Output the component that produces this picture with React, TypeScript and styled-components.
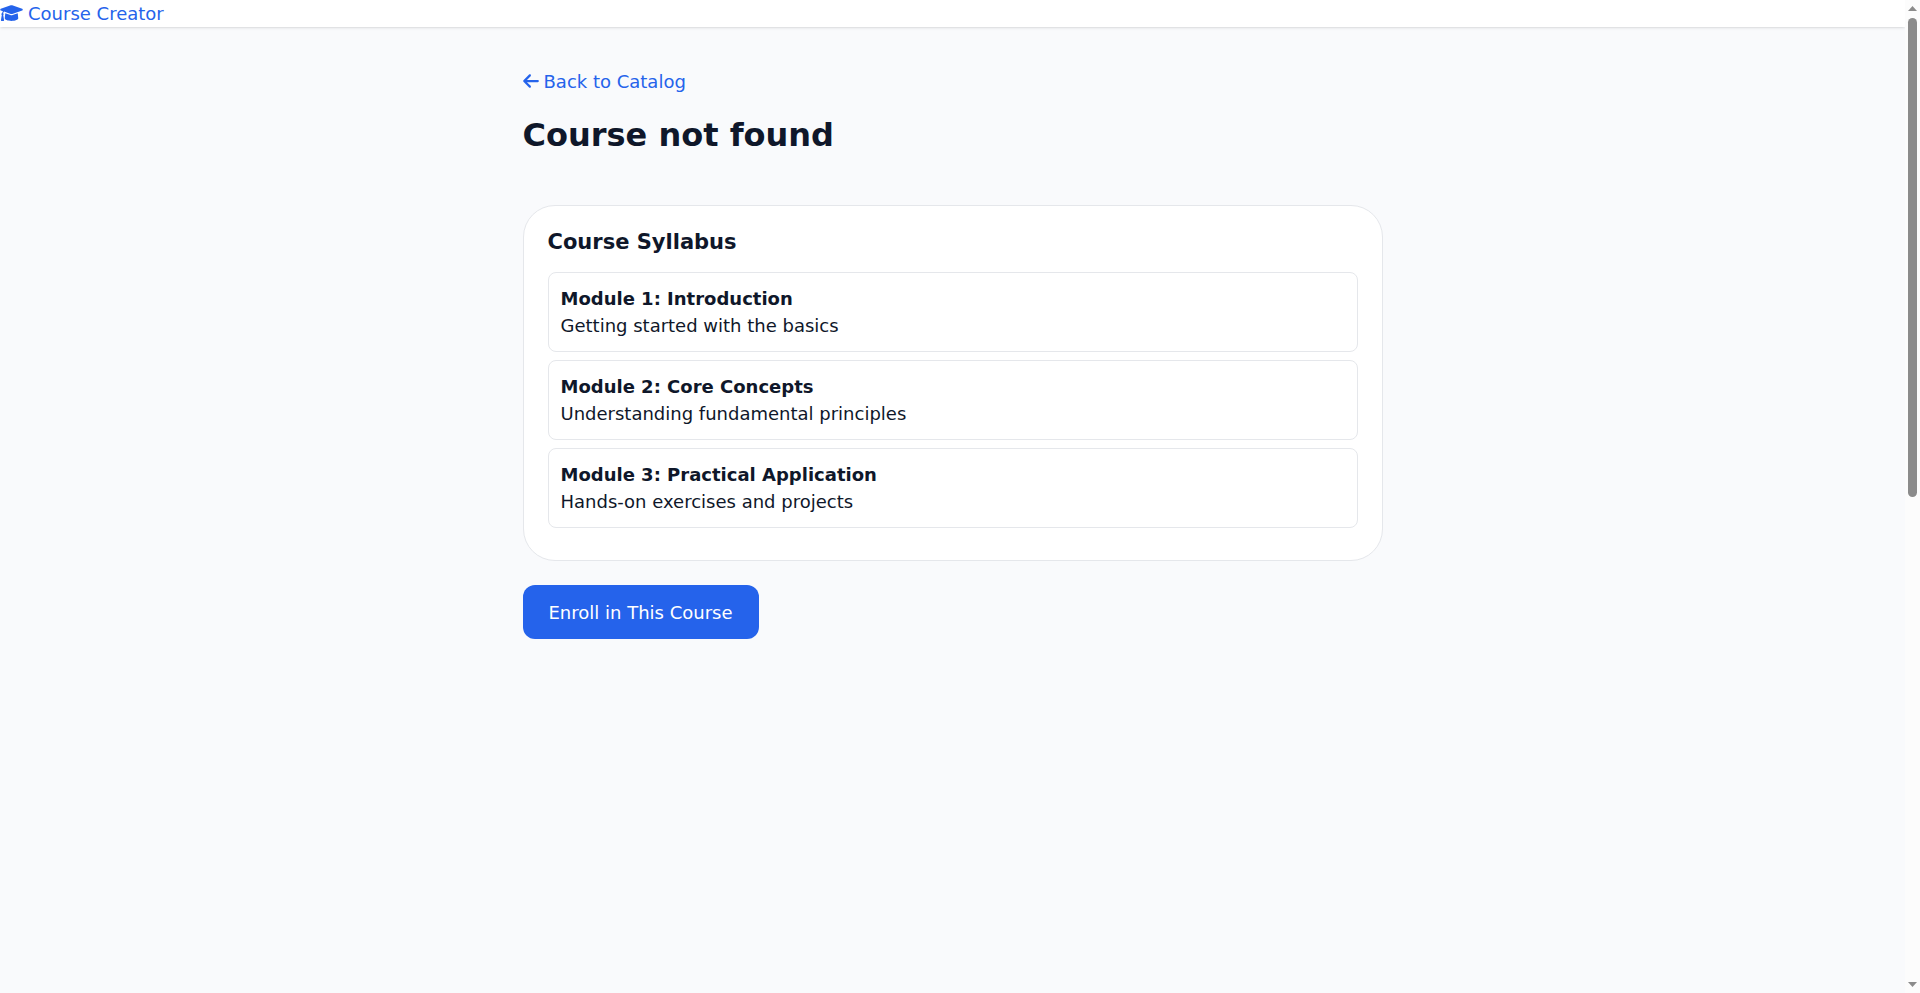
import React from "react";
import styled, { createGlobalStyle } from "styled-components";
import { FaArrowLeft } from "react-icons/fa6";

const GlobalStyle = createGlobalStyle`
  * {
    box-sizing: border-box;
  }
  body {
    margin: 0;
    background: #f9fafc;
    color: #0f172a;
    font-family: "DejaVu Sans", sans-serif;
    font-size: 18px;
    line-height: 27px;
  }
`;

const Shell = styled.div`
  display: grid;
  grid-template-columns: minmax(0, 1fr) 15px;
  height: 100vh;
`;

const Page = styled.div`
  overflow: hidden;
`;

const ScrollTrack = styled.div`
  display: flex;
  flex-direction: column;
  align-items: center;
  padding: 6px 0;
  background: #fcfcfc;
`;

const ScrollArrow = styled.svg`
  display: block;
  width: 9px;
  height: 5px;
  fill: #8b8b8b;
`;

const ScrollLane = styled.div`
  flex: 1;
  width: 9px;
  padding: 7px 0;
`;

const ScrollThumb = styled.div`
  height: 50%;
  border-radius: 5px;
  background: #8b8b8b;
`;

const Header = styled.header`
  display: flex;
  background: #ffffff;
  box-shadow: 0 1px 3px rgba(0, 0, 0, 0.1), 0 1px 2px -1px rgba(0, 0, 0, 0.1);
`;

const IconLink = styled.a<{ $iconWidth: number }>`
  display: inline-flex;
  align-items: center;
  gap: 5px;
  color: #2563eb;
  text-decoration: none;

  svg {
    flex: none;
    height: 18px;
    width: ${(p) => p.$iconWidth}px;
    margin-bottom: 1px;
  }
`;

const Main = styled.main`
  max-width: 900px;
  margin: 0 auto;
  padding: 41px 20px;
`;

const Title = styled.h1`
  margin: 16px 0 48px;
  font-size: 32px;
  line-height: 44px;
  font-weight: 700;
`;

const Card = styled.section`
  margin-bottom: 24px;
  padding: 24px 24px 32px;
  background: #ffffff;
  border: 1px solid #e5e7eb;
  border-radius: 32px;
`;

const CardTitle = styled.h2`
  margin: 0 0 17px;
  font-size: 21px;
  line-height: 25px;
  font-weight: 700;
`;

const ModuleList = styled.ul`
  display: grid;
  gap: 8px;
  margin: 0;
  padding: 0;
  list-style: none;
`;

const Module = styled.li`
  padding: 12px;
  border: 1px solid #e5e7eb;
  border-radius: 8px;
`;

const ModuleName = styled.strong`
  display: block;
  font-weight: 700;
`;

const EnrollButton = styled.button`
  min-height: 54px;
  padding: 0 26px;
  border: 0;
  border-radius: 12px;
  background: #2563eb;
  color: #ffffff;
  font: inherit;
  cursor: pointer;
`;

const modules = [
  { name: "Module 1: Introduction", summary: "Getting started with the basics" },
  { name: "Module 2: Core Concepts", summary: "Understanding fundamental principles" },
  { name: "Module 3: Practical Application", summary: "Hands-on exercises and projects" },
];

function GraduationCap() {
  return (
    <svg viewBox="0 0 640 512" fill="currentColor" aria-hidden>
      <path d="M623.1 136.9l-282.7-101.2c-13.73-4.91-28.7-4.91-42.43 0L16.05 136.9C6.438 140.4 0 149.6 0 160s6.438 19.65 16.05 23.09L76.07 204.6c-11.89 15.8-20.26 34.16-24.55 53.95C40.05 263.4 32 274.8 32 288c0 9.953 4.814 18.49 11.94 24.36l-24.83 149C17.48 471.1 25 480 34.89 480H93.11c9.887 0 17.41-8.879 15.78-18.63l-24.83-149C91.19 306.5 96 297.1 96 288c0-10.29-5.174-19.03-12.72-24.89c4.252-17.76 12.88-33.82 24.94-47.03l190.6 68.23c13.73 4.91 28.7 4.91 42.43 0l282.7-101.2C633.6 179.6 640 170.4 640 160S633.6 140.4 623.1 136.9zM351.1 314.4C341.7 318.1 330.9 320 320 320c-10.92 0-21.69-1.867-32-5.555L142.8 262.5L128 405.3C128 446.6 213.1 480 320 480c105.1 0 192-33.4 192-74.67l-14.78-142.9L351.1 314.4z" />
    </svg>
  );
}

export default function App() {
  return (
    <Shell>
      <GlobalStyle />
      <Page>
        <Header>
          <IconLink href="#home" $iconWidth={23}>
            <GraduationCap />
            Course Creator
          </IconLink>
        </Header>
        <Main>
          <IconLink href="#catalog" $iconWidth={16}>
            <FaArrowLeft aria-hidden />
            Back to Catalog
          </IconLink>
          <Title>Course not found</Title>
          <Card>
            <CardTitle>Course Syllabus</CardTitle>
            <ModuleList>
              {modules.map((module) => (
                <Module key={module.name}>
                  <ModuleName>{module.name}</ModuleName>
                  {module.summary}
                </Module>
              ))}
            </ModuleList>
          </Card>
          <EnrollButton type="button">Enroll in This Course</EnrollButton>
        </Main>
      </Page>
      <ScrollTrack aria-hidden>
        <ScrollArrow viewBox="0 0 9 5">
          <path d="M4.5 0 9 5H0z" />
        </ScrollArrow>
        <ScrollLane>
          <ScrollThumb />
        </ScrollLane>
        <ScrollArrow viewBox="0 0 9 5">
          <path d="M0 0h9L4.5 5z" />
        </ScrollArrow>
      </ScrollTrack>
    </Shell>
  );
}
